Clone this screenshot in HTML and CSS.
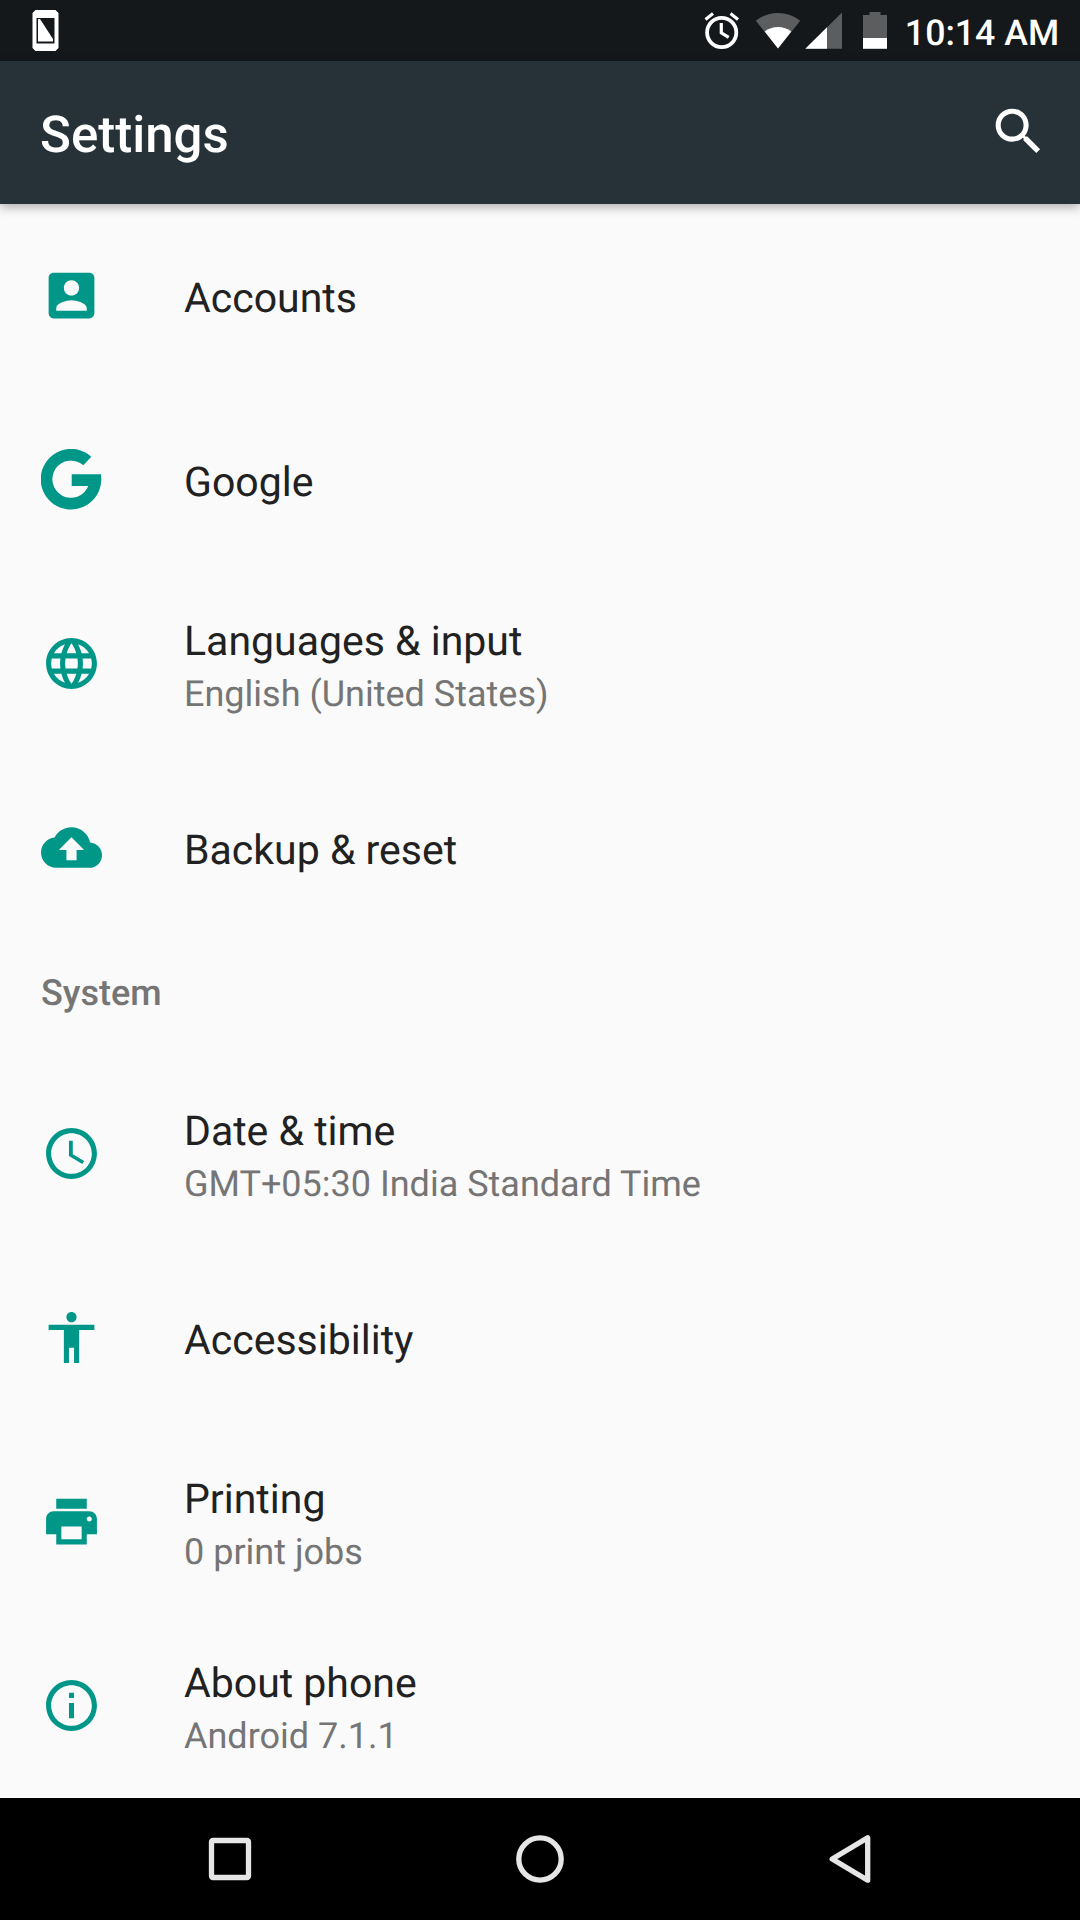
FILE: index.html
```html
<!DOCTYPE html>
<html lang="en">
<head>
    <meta charset="UTF-8">
    <meta name="viewport" content="width=device-width, initial-scale=1.0">
    <title>Settings</title>
    <link rel="stylesheet" href="styles.css">
</head>
<body>
    <div class="status-bar">
        <svg class="status-phone" width="26" height="42" viewBox="0 0 26 42">
            <path fill="#fff" fill-rule="evenodd" d="M3 0h20l3 3v35l-3 3H3l-3-3V3zM4 8v25.500h18V8z"/>
            <path fill="#fff" d="M5.500 9h2L20.500 29v2.500h-15z"/>
        </svg>
        <div class="status-icons">
            <svg class="status-alarm" width="36" height="38" viewBox="0 0 36 38">
                <circle cx="17.700" cy="20.500" r="14.600" fill="none" stroke="#fff" stroke-width="3.800"/>
                <path d="M17.300 11v9.800l7.400 4.600M1.500 7.500l7.500-6M26.500 1.500l7.500 6" fill="none" stroke="#fff" stroke-width="3.200"/>
            </svg>
            <svg class="status-wifi" width="46" height="38" viewBox="0 0 46 38">
                <path fill="#5b5d5f" d="M23 36.500L.8 8.800C7 3.800 14.500 1 23 1s16 2.800 22.200 7.800z"/>
                <path fill="#fff" d="M23 36.500L9.700 19.500C13.500 16.700 18 15 23 15s9.500 1.700 13.300 4.500z"/>
            </svg>
            <svg class="status-signal" width="37" height="38" viewBox="0 0 37 38">
                <path fill="#5b5d5f" d="M37 .5v36.300H.3z"/>
                <path fill="#fff" d="M22 15.300v21.500H.3z"/>
            </svg>
            <svg class="status-battery" width="24" height="38" viewBox="0 0 24 38">
                <path fill="#5b5d5f" d="M6.500 0h11v3H24v23H0V3h6.500z"/>
                <path fill="#fff" d="M0 26h24v10.800H0z"/>
            </svg>
            <span class="clock">10:14 AM</span>
        </div>
    </div>

    <div class="header">
        <h1>Settings</h1>
        <svg class="search" width="61" height="61" viewBox="0 0 24 24">
            <path d="M15.500 14h-.79l-.28-.27C15.410 12.590 16 11.110 16 9.500 16 5.910 13.090 3 9.500 3S3 5.910 3 9.500 5.910 16 9.500 16c1.610 0 3.090-.59 4.230-1.570l.27.28v.79l5 4.990L20.490 19l-4.990-5zm-6 0C7.010 14 5 11.990 5 9.500S7.010 5 9.500 5 14 7.010 14 9.500 11.990 14 9.500 14z"/>
        </svg>
    </div>

    <div class="settings-list">
        <div class="item">
            <svg class="icon" viewBox="0 0 24 24"><path d="M3 5v14c0 1.100.89 2 2 2h14c1.100 0 2-.9 2-2V5c0-1.100-.9-2-2-2H5c-1.110 0-2 .9-2 2zm12 4c0 1.660-1.340 3-3 3s-3-1.340-3-3 1.340-3 3-3 3 1.340 3 3zm-9 8c0-2 4-3.100 6-3.100s6 1.100 6 3.100v1H6v-1z"/></svg>
            <div class="text"><div class="title">Accounts</div></div>
        </div>
        <div class="item">
            <svg class="icon" viewBox="0 0 61 61"><path d="M50.300 7.700A30.300 30.300 0 1 0 59.900 25.300H30.700V37h16.600A18.600 18.600 0 1 1 42.300 16.300z"/></svg>
            <div class="text"><div class="title">Google</div></div>
        </div>
        <div class="item">
            <svg class="icon" viewBox="0 0 24 24"><path d="M11.990 2C6.470 2 2 6.480 2 12s4.470 10 9.990 10C17.520 22 22 17.520 22 12S17.520 2 11.990 2zm6.930 6h-2.950c-.32-1.250-.78-2.450-1.380-3.560 1.840.63 3.370 1.910 4.330 3.560zM12 4.040c.83 1.200 1.480 2.530 1.910 3.960h-3.820c.43-1.430 1.080-2.760 1.910-3.960zM4.260 14C4.100 13.360 4 12.690 4 12s.1-1.360.26-2h3.380c-.08.66-.14 1.320-.14 2 0 .68.06 1.340.14 2H4.260zm.82 2h2.950c.32 1.250.78 2.450 1.380 3.560-1.840-.63-3.370-1.900-4.330-3.560zm2.950-8H5.080c.96-1.660 2.490-2.930 4.330-3.560C8.810 5.550 8.350 6.750 8.030 8zM12 19.960c-.83-1.200-1.480-2.530-1.910-3.960h3.820c-.43 1.430-1.080 2.760-1.910 3.960zM14.340 14H9.660c-.09-.66-.16-1.320-.16-2 0-.68.07-1.350.16-2h4.680c.09.65.16 1.320.16 2 0 .68-.07 1.340-.16 2zm.25 5.560c.6-1.110 1.060-2.310 1.380-3.560h2.950c-.96 1.650-2.490 2.930-4.330 3.560zM16.360 14c.08-.66.14-1.320.14-2 0-.68-.06-1.340-.14-2h3.380c.16.64.26 1.310.26 2s-.1 1.360-.26 2h-3.380z"/></svg>
            <div class="text">
                <div class="title">Languages &amp; input</div>
                <div class="summary">English (United States)</div>
            </div>
        </div>
        <div class="item">
            <svg class="icon" viewBox="0 0 24 24"><path d="M19.350 10.040C18.670 6.590 15.640 4 12 4 9.110 4 6.600 5.640 5.350 8.040 2.340 8.360 0 10.910 0 14c0 3.310 2.690 6 6 6h13c2.760 0 5-2.240 5-5 0-2.640-2.050-4.780-4.650-4.960zM14 13v4h-4v-4H7l5-5 5 5h-3z"/></svg>
            <div class="text"><div class="title">Backup &amp; reset</div></div>
        </div>

        <div class="category">System</div>

        <div class="item">
            <svg class="icon" viewBox="0 0 24 24"><path d="M11.990 2C6.470 2 2 6.480 2 12s4.470 10 9.990 10C17.520 22 22 17.520 22 12S17.520 2 11.990 2zM12 20c-4.420 0-8-3.580-8-8s3.580-8 8-8 8 3.580 8 8-3.580 8-8 8zm.5-13H11v6l5.250 3.150.75-1.230-4.500-2.670z"/></svg>
            <div class="text">
                <div class="title">Date &amp; time</div>
                <div class="summary">GMT+05:30 India Standard Time</div>
            </div>
        </div>
        <div class="item">
            <svg class="icon" viewBox="0 0 24 24"><path d="M12 2c1.100 0 2 .9 2 2s-.9 2-2 2-2-.9-2-2 .9-2 2-2zm9 7h-6v13h-2v-6h-2v6H9V9H3V7h18v2z"/></svg>
            <div class="text"><div class="title">Accessibility</div></div>
        </div>
        <div class="item">
            <svg class="icon" viewBox="0 0 24 24"><path d="M19 8H5c-1.660 0-3 1.340-3 3v6h4v4h12v-4h4v-6c0-1.660-1.340-3-3-3zm-3 11H8v-5h8v5zm3-7c-.55 0-1-.45-1-1s.45-1 1-1 1 .45 1 1-.45 1-1 1zm-1-9H6v4h12V3z"/></svg>
            <div class="text">
                <div class="title">Printing</div>
                <div class="summary">0 print jobs</div>
            </div>
        </div>
        <div class="item">
            <svg class="icon" viewBox="0 0 24 24"><path d="M11 17h2v-6h-2v6zm1-15C6.480 2 2 6.480 2 12s4.480 10 10 10 10-4.480 10-10S17.520 2 12 2zm0 18c-4.410 0-8-3.590-8-8s3.590-8 8-8 8 3.590 8 8-3.590 8-8 8zM11 9h2V7h-2v2z"/></svg>
            <div class="text">
                <div class="title">About phone</div>
                <div class="summary">Android 7.1.1</div>
            </div>
        </div>
    </div>

    <div class="nav-bar">
        <div class="nav-btn">
            <svg width="50" height="50" viewBox="0 0 50 50"><rect x="6.500" y="6.500" width="37" height="37" rx="1.500"/></svg>
        </div>
        <div class="nav-btn">
            <svg width="50" height="50" viewBox="0 0 50 50"><circle cx="25" cy="25" r="21.200"/></svg>
        </div>
        <div class="nav-btn">
            <svg width="50" height="50" viewBox="0 0 50 50"><path d="M42.700 3.800v42.400L7.200 25z"/></svg>
        </div>
    </div>
</body>
</html>
```
FILE: styles.css
```css
* {
    margin: 0;
    padding: 0;
    box-sizing: border-box;
}

body {
    width: 1080px;
    height: 1920px;
    background-color: #fafafa;
    color: #212121;
    font-family: Roboto, sans-serif;
    text-rendering: geometricPrecision;
    display: flex;
    flex-direction: column;
    overflow: hidden;
}

svg {
    display: block;
    flex-shrink: 0;
}

/* Status bar */
.status-bar {
    height: 61px;
    background-color: #14181b;
    display: flex;
    justify-content: space-between;
    align-items: flex-start;
    padding: 0 20px 0 32px;
}

.status-phone {
    width: 27px;
    margin-top: 10px;
}

.status-icons {
    display: flex;
    align-items: flex-start;
    padding-top: 12px;
}

.status-wifi {
    margin-left: 15px;
}

.status-signal {
    margin-left: 4px;
}

.status-battery {
    margin-left: 21px;
}

.clock {
    width: 156px;
    margin-left: 17px;
    color: white;
    font-size: 35.7px;
    font-weight: 500;
    line-height: 42px;
    white-space: nowrap;
    text-align: center;
}

/* Toolbar */
.header {
    height: 143px;
    background-color: #263238;
    box-shadow: 0 3px 10px rgba(0, 0, 0, 0.32);
    display: flex;
    justify-content: space-between;
    align-items: center;
    padding: 0 31px 0 40px;
    position: relative;
}

h1 {
    color: white;
    font-size: 51px;
    font-weight: 500;
    line-height: 60px;
    padding-top: 7px;
}

.search {
    fill: white;
    margin-bottom: 3px;
}

/* List */
.settings-list {
    flex: 1;
}

.item {
    height: 184px;
    display: flex;
    align-items: center;
    padding: 0 41px 1px;
}

.icon {
    width: 61px;
    height: 61px;
    fill: #009688;
}

.text {
    margin-left: 82px;
    padding-top: 7px;
}

.title {
    font-size: 41px;
    line-height: 48px;
}

.summary {
    margin: 6px 0 1px;
    color: #757575;
    font-size: 36px;
    line-height: 44px;
}

.category {
    height: 122px;
    padding: 32px 41px 0;
    color: #757575;
    font-size: 36px;
    font-weight: 500;
    line-height: 42px;
}

/* Navigation bar */
.nav-bar {
    height: 122px;
    background-color: black;
    display: flex;
    padding: 0 75px;
}

.nav-btn {
    flex: 1;
    display: flex;
    justify-content: center;
    align-items: center;
}

.nav-btn svg {
    fill: none;
    stroke: #e6e6e6;
    stroke-width: 5.3;
    stroke-linejoin: round;
}
```
